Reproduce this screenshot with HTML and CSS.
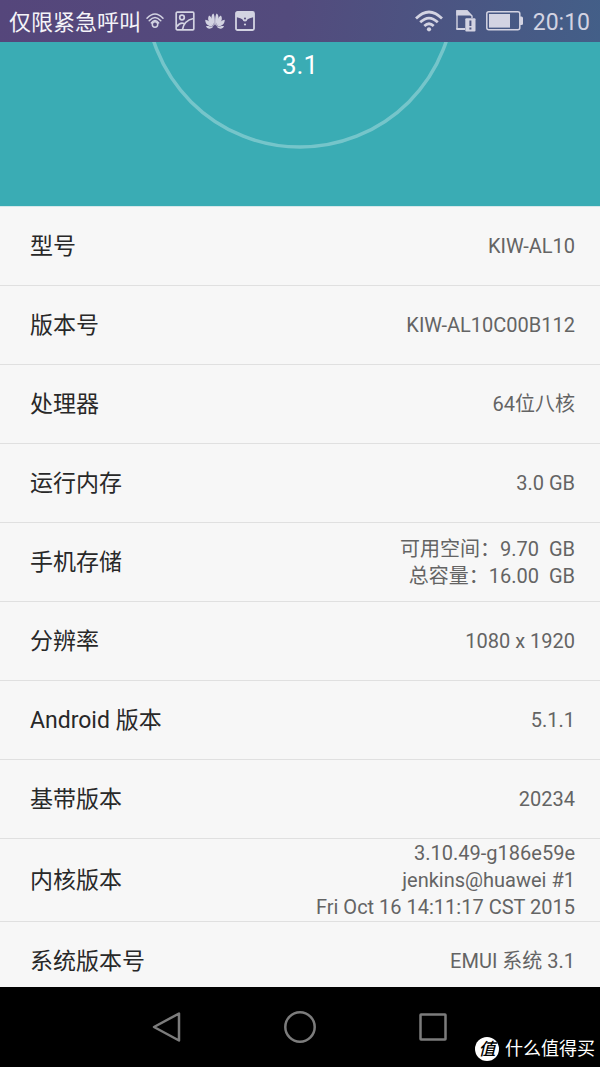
FILE: index.html
```html
<!DOCTYPE html>
<html lang="zh-CN">
<head>
<meta charset="utf-8">
<meta name="viewport" content="width=device-width, initial-scale=1">
<title>关于手机</title>
<link rel="stylesheet" href="styles.css">
</head>
<body>
<div class="phone">
  <header class="status">
    <span class="carrier">仅限紧急呼叫</span>
    <div class="notices">
      <svg width="20" height="20" viewBox="0 0 20 20" fill="none" stroke="currentColor" stroke-width="1.500" stroke-linecap="round" aria-hidden="true">
        <path d="M2 7.300Q10 -1.500 18 7.300M4.200 9.800Q10 3 15.800 9.800M6.300 12Q10 7 13.700 12"/>
        <circle cx="10" cy="13.500" r="2.700"/>
      </svg>
      <svg width="20" height="20" viewBox="0 0 20 20" fill="none" stroke="currentColor" stroke-width="1.700" aria-hidden="true">
        <rect x="1.200" y="1.200" width="17.600" height="17.600" rx="1"/>
        <circle cx="7" cy="6.500" r="2.300"/>
        <path d="M2 15.500Q5 11 9 12.500M7.500 18.500Q9 9.500 18.500 7.500"/>
      </svg>
      <svg width="20" height="20" viewBox="0 0 20 20" fill="currentColor" aria-hidden="true">
        <path d="M9.700 14.500C5.800 9.500 5.600 4.500 8.300 2.600C9.900 4.600 10 9 9.700 14.500ZM10.300 14.500C14.200 9.500 14.400 4.500 11.700 2.600C10.100 4.600 10 9 10.300 14.500Z"/>
        <path d="M8.900 15C3.300 12 2 7.600 4.100 4.500C6.900 6 8.300 10 8.900 15ZM11.100 15C16.700 12 18 7.600 15.900 4.500C13.100 6 11.700 10 11.100 15Z"/>
        <path d="M8.300 15.700C2.600 15.400 0 12.300.300 8.700C3.900 9.200 6.600 12 8.300 15.700ZM11.700 15.700C17.400 15.400 20 12.300 19.700 8.700C16.100 9.200 13.400 12 11.700 15.700Z"/>
        <path d="M8 16.300C5 18.600 2 17.900 1 15C3.300 14.800 5.800 15.400 8 16.300ZM12 16.300C15 18.600 18 17.900 19 15C16.700 14.800 14.200 15.400 12 16.300Z"/>
      </svg>
      <svg width="20" height="20" viewBox="0 0 20 20" aria-hidden="true">
        <rect x="1" y="1" width="18" height="18" rx="1.500" fill="none" stroke="currentColor" stroke-width="1.800"/>
        <path d="M1 1H19V6Q14 7 12 8.500H8Q6 7 1 6Z" fill="currentColor"/>
        <circle cx="10" cy="8.300" r="2.300" fill="currentColor"/>
        <circle class="notch" cx="10" cy="7.500" r="1"/>
        <circle cx="10" cy="13.500" r="1.100" fill="currentColor"/>
      </svg>
    </div>
    <div class="system">
      <svg width="28" height="22" viewBox="0 0 28 22" fill="none" stroke="currentColor" stroke-width="2.700" aria-hidden="true">
        <path d="M1 8.500Q14 -4.500 27 8.500M5.200 12.300Q14 3.800 22.800 12.300M9.300 16Q14 11.500 18.700 16"/>
        <circle cx="14" cy="19.300" r="2.100" fill="currentColor" stroke="none"/>
      </svg>
      <svg width="20" height="22" viewBox="0 0 20 22" aria-hidden="true">
        <path d="M1 19V1H11L16 6V8" fill="none" stroke="currentColor" stroke-width="1.400"/>
        <path d="M.300.300H11.300L16 5.500H.300ZM.300 18H9V20H.300Z" fill="currentColor"/>
        <rect x="9.300" y="8.300" width="10.200" height="13.200" rx="1" fill="currentColor"/>
        <path class="mark" d="M14.400 10.500V16M14.400 17.500V19.500"/>
      </svg>
      <svg width="37" height="20" viewBox="0 0 37 20" aria-hidden="true">
        <rect x=".800" y=".800" width="33" height="18" rx="2" fill="none" stroke="currentColor" stroke-width="1.500"/>
        <rect x="3" y="3" width="21" height="13.600" fill="currentColor"/>
        <path d="M34 5.500H35.500Q37 5.500 37 7V12.500Q37 14 35.500 14H34Z" fill="currentColor"/>
      </svg>
      <time class="clock">20:10</time>
    </div>
  </header>

  <main class="content">
    <section class="hero">
      <svg class="ring" width="312" height="312" viewBox="0 0 312 312" aria-hidden="true">
        <circle cx="156" cy="156" r="154" fill="none" stroke="#fff" stroke-opacity=".3" stroke-width="3.500"/>
      </svg>
      <p class="version">3.1</p>
    </section>
    <dl class="specs">
      <div class="row"><dt>型号</dt><dd>KIW-AL10</dd></div>
      <div class="row"><dt>版本号</dt><dd>KIW-AL10C00B112</dd></div>
      <div class="row"><dt>处理器</dt><dd>64位八核</dd></div>
      <div class="row"><dt>运行内存</dt><dd>3.0 GB</dd></div>
      <div class="row"><dt>手机存储</dt><dd>可用空间：9.70&nbsp; GB<br>总容量：16.00&nbsp; GB</dd></div>
      <div class="row"><dt>分辨率</dt><dd>1080 x 1920</dd></div>
      <div class="row"><dt>Android 版本</dt><dd>5.1.1</dd></div>
      <div class="row"><dt>基带版本</dt><dd>20234</dd></div>
      <div class="row"><dt>内核版本</dt><dd>3.10.49-g186e59e<br>jenkins@huawei #1<br>Fri Oct 16 14:11:17 CST 2015</dd></div>
      <div class="row"><dt>系统版本号</dt><dd>EMUI 系统 3.1</dd></div>
    </dl>
  </main>

  <nav class="navbar" aria-label="系统导航">
    <button class="key" type="button" aria-label="返回">
      <svg width="32" height="32" viewBox="0 0 32 32"><path d="M28 2.500V29.500L3 16Z"/></svg>
    </button>
    <button class="key" type="button" aria-label="主页">
      <svg width="32" height="32" viewBox="0 0 32 32"><circle cx="16" cy="16" r="14.700"/></svg>
    </button>
    <button class="key" type="button" aria-label="最近任务">
      <svg width="32" height="32" viewBox="0 0 32 32"><rect x="3.500" y="3.500" width="25" height="25" rx=".500"/></svg>
    </button>
    <div class="watermark"><span class="seal">值</span><span>什么值得买</span></div>
  </nav>
</div>
</body>
</html>
```

FILE: styles.css
```css
* {
  box-sizing: border-box;
}

body {
  margin: 0;
  font-family: Roboto, "Noto Sans CJK SC", sans-serif;
}

.phone {
  display: flex;
  flex-direction: column;
  height: 100vh;
  overflow: hidden;
  background: #f7f7f7;
}

.status {
  flex: none;
  display: flex;
  align-items: center;
  height: 42px;
  padding: 0 10px 0 9px;
  background: linear-gradient(100deg, #55467b 0%, #534b7d 48%, #435f88 100%);
  color: #d3d3e2;
}

.carrier {
  padding-top: 3px;
  font-size: 22px;
  line-height: 32px;
  color: #f4f3f8;
}

.notices {
  display: flex;
  gap: 10px;
  margin-left: 4px;
}

.system {
  display: flex;
  align-items: center;
  gap: 10px;
  margin-left: auto;
}

.system svg:first-child {
  margin-right: 3px;
}

.notch {
  fill: #534a7c;
}

.mark {
  stroke: #4b5481;
  stroke-width: 2;
}

.clock {
  padding-top: 3px;
  font-size: 23px;
  line-height: 32px;
}

.content {
  flex: 1;
  min-height: 0;
  overflow: hidden;
}

.hero {
  position: relative;
  height: 164px;
  overflow: hidden;
  background: #3aacb4;
}

.ring {
  position: absolute;
  left: 50%;
  bottom: 57px;
  margin-left: -156px;
}

.version {
  margin: 0;
  padding-top: 7px;
  font-size: 26px;
  line-height: 32px;
  text-align: center;
  color: #fff;
}

.specs {
  margin: 0;
  border-top: 1px solid #d5e8ea;
}

.row {
  display: flex;
  align-items: center;
  justify-content: space-between;
  min-height: 79px;
  padding: 1px 25px 0 30px;
  border-bottom: 1px solid #e0e0e0;
}

.row dt {
  font-size: 23px;
  line-height: 32px;
  font-weight: 400;
  color: #282828;
}

.row dd {
  margin: 0;
  font-size: 20px;
  line-height: 27px;
  text-align: right;
  color: #646464;
}

.navbar {
  position: relative;
  flex: none;
  display: flex;
  justify-content: center;
  align-items: center;
  gap: 101px;
  height: 80px;
  background: #000;
}

.key {
  display: flex;
  padding: 0;
  border: 0;
  background: none;
}

.key svg {
  fill: none;
  stroke: #7c7c7c;
  stroke-width: 2.5;
  stroke-linejoin: round;
}

.watermark {
  position: absolute;
  right: 5px;
  bottom: 6px;
  display: flex;
  align-items: center;
  gap: 6px;
  font-size: 18px;
  line-height: 24px;
  color: #fff;
}

.seal {
  width: 24px;
  height: 24px;
  border-radius: 50%;
  background: #fff;
  color: #000;
  font-size: 17px;
  font-style: italic;
  font-weight: 500;
  text-align: center;
}
```
